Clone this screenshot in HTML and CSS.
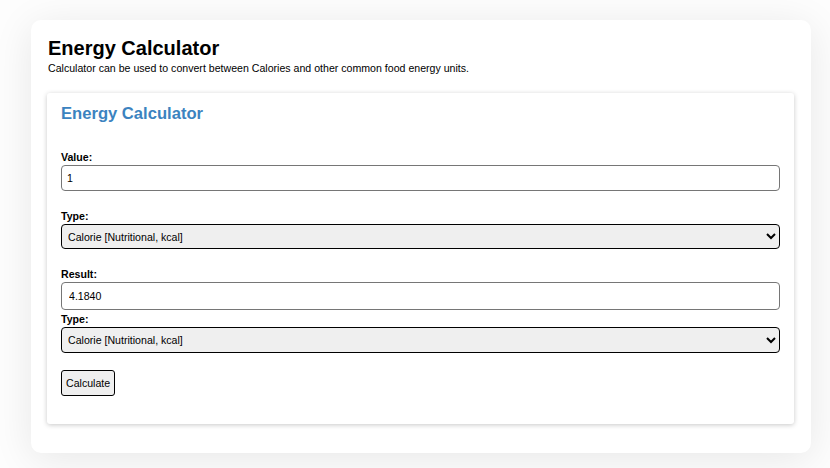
FILE: index.html
```html
<!DOCTYPE html>
<html>
<head>
<meta charset="utf-8">
<link rel="stylesheet" href="styles.css">
</head>
<body>
<div class="card">
  <h1 class="title">Energy Calculator</h1>
  <p class="subtitle">Calculator can be used to convert between Calories and other common food energy units.</p>
  <div class="panel">
    <h2 class="panel-title">Energy Calculator</h2>
    <div class="field first">
      <label class="label">Value:</label>
      <input class="input" type="text" value="1">
    </div>
    <div class="field">
      <label class="label">Type:</label>
      <select class="select"><option>Calorie [Nutritional, kcal]</option></select>
    </div>
    <div class="field">
      <label class="label">Result:</label>
      <input class="input result" type="text" value="4.1840">
    </div>
    <div class="field tight">
      <label class="label">Type:</label>
      <select class="select second"><option>Calorie [Nutritional, kcal]</option></select>
    </div>
    <button class="btn">Calculate</button>
  </div>
</div>
</body>
</html>
```
FILE: styles.css
```css
html, body { margin: 0; padding: 0; }
body {
  background: #fdfdfd;
  font-family: "Liberation Sans", Arial, sans-serif;
  color: #000;
  padding: 20px 19px 16px 31px;
}
.card {
  background: #fff;
  border-radius: 10px;
  padding: 16px 17px 29px 16px;
  width: 780px;
  box-sizing: border-box;
  box-shadow: 0 6px 40px rgba(0,0,0,0.09);
}
.title {
  margin: 0 0 0 1px;
  font-size: 20px;
  line-height: 24px;
  font-weight: bold;
}
.subtitle {
  margin: 1px 0 0 1px;
  font-size: 10.6px;
  line-height: 14px;
}
.panel {
  margin-top: 18px;
  background: #fff;
  border-radius: 3px;
  box-shadow: 0 1px 5px rgba(0,0,0,0.22);
  padding: 10px 14px 28px 14px;
}
.panel-title {
  margin: 0;
  font-size: 16.6px;
  line-height: 22px;
  color: #3b83c0;
  font-weight: bold;
}
.field { margin-top: 19px; }
.field.first { margin-top: 26px; }
.field.tight { margin-top: 3px; }
.label {
  display: block;
  font-size: 10.6px;
  font-weight: bold;
  line-height: 13px;
  margin-bottom: 1px;
}
.input {
  display: block;
  width: 100%;
  box-sizing: border-box;
  height: 26px;
  border: 1px solid #767676;
  border-radius: 4px;
  padding: 0 5px;
  font-family: "Liberation Sans", Arial, sans-serif;
  font-size: 10.6px;
  color: #000;
  background: #fff;
}
.input.result { height: 28px; padding: 0 7px; }
.select {
  display: block;
  width: 100%;
  box-sizing: border-box;
  height: 25px;
  border: 1px solid #000;
  border-radius: 4px;
  background: #efefef;
  font-family: "Liberation Sans", Arial, sans-serif;
  font-size: 10.6px;
  color: #000;
  padding: 0 2px;
}
.select.second { height: 26px; }
.btn {
  margin-top: 17px;
  display: block;
  height: 26px;
  padding: 0 4px;
  border: 1px solid #000;
  border-radius: 3px;
  background: #efefef;
  font-family: "Liberation Sans", Arial, sans-serif;
  font-size: 10.6px;
  color: #000;
}
```
